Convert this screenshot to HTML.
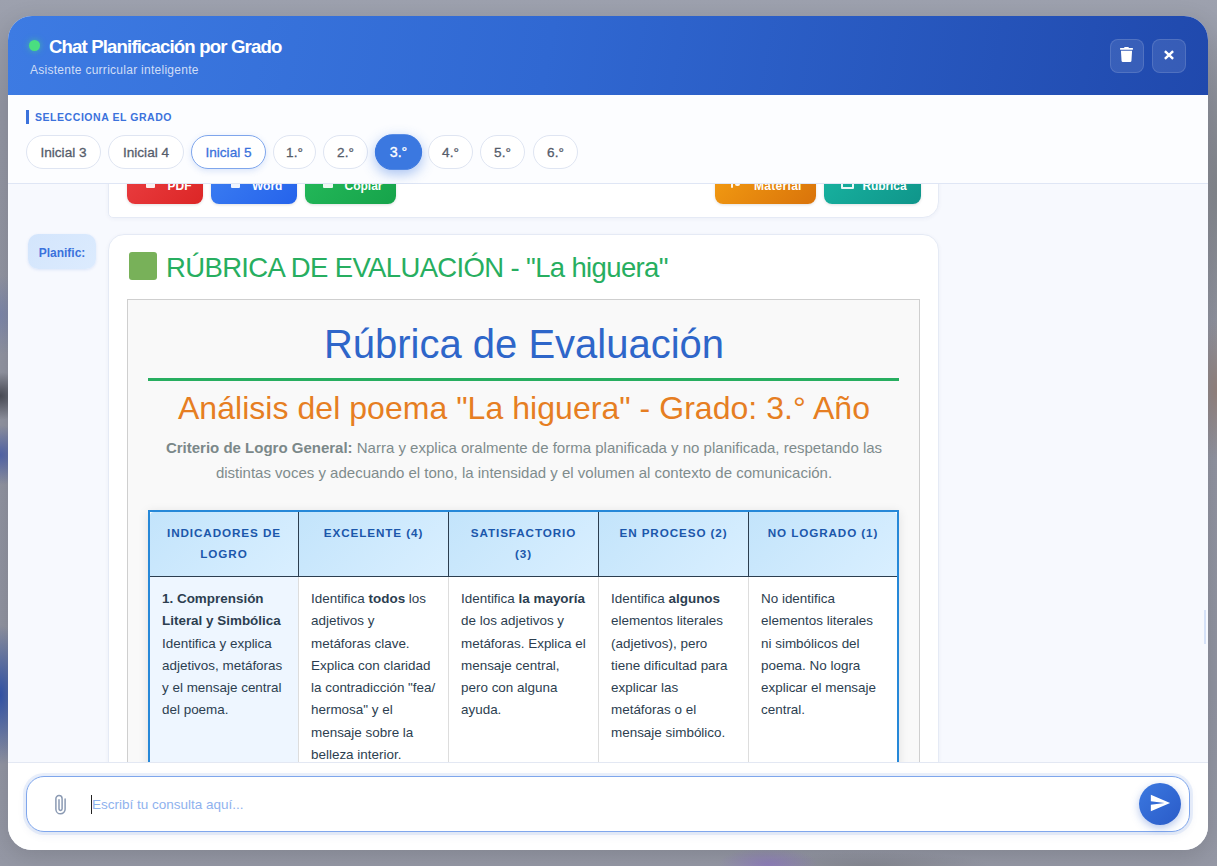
<!DOCTYPE html>
<html lang="es">
<head>
<meta charset="utf-8">
<title>Chat Planificación por Grado</title>
<style>
*{box-sizing:border-box;margin:0;padding:0}
html,body{width:1217px;height:866px;overflow:hidden}
body{font-family:"Liberation Sans",sans-serif;position:relative;background:#9397a5}
.backdrop{position:absolute;inset:0;background:
 radial-gradient(ellipse 26px 24px at 0px 396px,rgba(70,72,82,.95),rgba(70,72,82,0) 100%),
 radial-gradient(ellipse 30px 30px at 0px 455px,rgba(78,98,170,.95),rgba(78,98,170,0) 100%),
 radial-gradient(ellipse 26px 40px at 0px 315px,rgba(110,125,175,.6),rgba(110,125,175,0) 100%),
 radial-gradient(ellipse 30px 70px at 0px 695px,rgba(50,84,170,1),rgba(50,84,170,0) 100%),
 radial-gradient(ellipse 50px 16px at 768px 864px,rgba(140,120,190,.8),rgba(140,120,190,0) 100%),
 radial-gradient(ellipse 24px 70px at 1217px 390px,rgba(146,128,122,.95),rgba(146,128,122,0) 100%),
 radial-gradient(ellipse 24px 160px at 1217px 190px,rgba(128,131,136,.9),rgba(128,131,136,0) 100%),
 radial-gradient(ellipse 120px 14px at 870px 866px,rgba(125,127,136,.7),rgba(125,127,136,0) 100%),
 linear-gradient(180deg,#9da1ae 0%,#9295a2 12%,#9093a0 80%,#9598a5 100%);}
.modal{position:absolute;left:8px;top:16px;width:1200px;height:834px;border-radius:24px;background:#f7f9fe;overflow:hidden;box-shadow:0 6px 24px rgba(0,0,0,.13)}
.header{position:absolute;left:0;top:0;width:1200px;height:79px;background:linear-gradient(100deg,#3d7be3 0%,#3068d2 45%,#2049ad 100%)}
.dot{position:absolute;left:21px;top:24px;width:11px;height:11px;border-radius:50%;background:#4ade80;box-shadow:0 0 6px rgba(74,222,128,.6)}
.title{position:absolute;left:41px;top:20px;font-size:18.6px;font-weight:700;color:#fff;white-space:nowrap;line-height:22px;letter-spacing:-.85px}
.subtitle{position:absolute;left:22px;top:46px;font-size:12px;color:#d0ddf6;white-space:nowrap;line-height:16px;letter-spacing:.27px}
.hbtn{position:absolute;top:23px;width:34px;height:34px;border-radius:8px;background:rgba(255,255,255,.10);border:1px solid rgba(255,255,255,.13)}
.grades{position:absolute;left:0;top:79px;width:1200px;height:89px;background:#fcfdff;border-bottom:1px solid #dfe6f5}
.glabel{position:absolute;left:18px;top:15px;height:14px;border-left:3px solid #3b72dc;padding-left:6px;font-size:10.5px;font-weight:700;color:#3b72dc;letter-spacing:.55px;line-height:14px;white-space:nowrap}
.pill{position:absolute;top:40px;height:33.500px;border-radius:17px;border:1px solid #dfe5f2;background:#fff;color:#565d6b;font-size:13.6px;font-weight:400;-webkit-text-stroke:.3px currentColor;line-height:34px;text-align:center;white-space:nowrap}
.pill.hover{border-color:#7fa6ec;color:#3b72dc;box-shadow:0 2px 6px rgba(59,114,220,.18)}
.pill.sel{background:#3b78e0;border-color:#3b78e0;color:#fff;box-shadow:0 4px 12px rgba(59,120,224,.45);transform:scale(1.05)}
.chat{position:absolute;left:0;top:168px;width:1200px;height:578px;overflow:hidden;background:#f7f9fe}
.card{position:absolute;left:100px;width:831px;background:#fff;border:1px solid #e5eaf5;border-radius:16px;box-shadow:0 1px 4px rgba(40,60,120,.05)}
.abtn{position:absolute;top:42px;height:34px;border-radius:8px;color:#fff;font-size:12px;font-weight:700;white-space:nowrap;box-shadow:0 1px 3px rgba(0,0,0,.12)}
.abtn span{position:absolute;top:9px;line-height:14px}
.ic{position:absolute;top:8px;background:#fff;border-radius:1px;opacity:.92}
.ic2{position:absolute;top:9px;border:2px solid #fff;border-radius:1px;opacity:.92}
.badge{position:absolute;left:20px;top:50px;width:68px;height:35px;border-radius:10px;background:linear-gradient(135deg,#d3e5fc,#dcebfe);color:#3b72dc;font-size:12px;font-weight:700;line-height:39px;text-align:center;box-shadow:0 1px 3px rgba(59,114,220,.15)}
.gsq{position:absolute;left:20px;top:17px;width:28px;height:28px;border-radius:3px;background:#78b159}
.mtitle{position:absolute;left:57px;top:15px;font-size:27.5px;line-height:36px;color:#27ae60;white-space:nowrap;letter-spacing:-.64px}
.rbox{position:absolute;left:18px;top:64px;width:793px;height:700px;background:#f9f9f9;border:1px solid #cfcfcf}
.r1{position:absolute;left:0;width:792px;top:21px;text-align:center;font-size:40px;line-height:46px;color:#2e66c9;white-space:nowrap}
.rline{position:absolute;left:20px;top:78px;width:751px;height:3px;background:#27ae60}
.r2{position:absolute;left:0;width:792px;top:89px;text-align:center;font-size:32px;line-height:38px;color:#e67e22;white-space:nowrap;letter-spacing:.04px}
.r3{position:absolute;left:0;width:792px;top:135px;text-align:center;font-size:15px;line-height:25px;color:#7f8c8d;white-space:nowrap}
.r3 b{color:#7b8889}
.tbl{position:absolute;left:20px;top:210px;width:751px;height:400px;border:2px solid #2688d8;background:#fff;box-shadow:0 2px 10px rgba(0,0,0,.10)}
.th{position:absolute;top:0;height:65px;background:linear-gradient(135deg,#c3e4fb,#d9efff);border-right:1px solid #2c3e50;border-bottom:1px solid #2c3e50;color:#1b57ab;font-weight:700;font-size:11.7px;letter-spacing:.9px;line-height:20.5px;text-align:center;padding-top:11px;white-space:nowrap}
.td{position:absolute;top:65px;height:340px;border-right:1px solid #ddd;font-size:13.44px;line-height:22.25px;color:#2c3e50;padding:11px 0 0 12px;white-space:nowrap;background:#fff}
.td.first{background:#eef6ff}
.inputbar{position:absolute;left:0;top:746px;width:1200px;height:88px;background:#fff;border-top:1px solid #e3e8f3}
.inputbox{position:absolute;left:18px;top:13px;width:1164px;height:56px;border-radius:18px;border:1px solid #7fa6ec;background:#fff;box-shadow:0 0 0 3px rgba(59,120,224,.10),0 3px 10px rgba(40,70,140,.08)}
.ph{position:absolute;left:65px;top:19px;font-size:13.5px;color:#8fb2ee;line-height:18px;white-space:nowrap}
.caret{position:absolute;left:64px;top:18px;width:1px;height:19px;background:#222}
.send{position:absolute;left:1112px;top:6px;width:42px;height:42px;border-radius:50%;background:linear-gradient(135deg,#3b78e0,#2a5bc8);box-shadow:0 3px 8px rgba(42,91,200,.35)}
</style>
</head>
<body>
<div class="backdrop"></div>
<div class="modal">
  <div class="header">
    <div class="dot"></div>
    <div class="title">Chat Planificación por Grado</div>
    <div class="subtitle">Asistente curricular inteligente</div>
    <div class="hbtn" style="left:1102px"><svg width="13" height="15" viewBox="0 0 448 512" preserveAspectRatio="none" style="position:absolute;left:9px;top:7px"><path fill="#fff" d="M432 32H312l-9.400-18.700A24 24 0 0 0 281.100 0H166.800a23.720 23.720 0 0 0-21.400 13.300L136 32H16A16 16 0 0 0 0 48v32a16 16 0 0 0 16 16h416a16 16 0 0 0 16-16V48a16 16 0 0 0-16-16zM53.200 467a48 48 0 0 0 47.900 45h245.800a48 48 0 0 0 47.900-45L416 128H32z"/></svg></div>
    <div class="hbtn" style="left:1144px"><svg width="12" height="12" viewBox="0 0 12 12" style="position:absolute;left:10px;top:9px"><path d="M1.900 2.200L10.100 9.800M10.100 2.200L1.900 9.800" stroke="#fff" stroke-width="2.500" stroke-linecap="butt" fill="none"/></svg></div>
  </div>
  <div class="grades">
    <div class="glabel">SELECCIONA EL GRADO</div>
    <div class="pill" style="left:18px;width:75px">Inicial 3</div>
    <div class="pill" style="left:100px;width:76px">Inicial 4</div>
    <div class="pill hover" style="left:183px;width:75px">Inicial 5</div>
    <div class="pill" style="left:265px;width:43px">1.°</div>
    <div class="pill" style="left:315px;width:45px">2.°</div>
    <div class="pill sel" style="left:368px;width:45px">3.°</div>
    <div class="pill" style="left:420px;width:45px">4.°</div>
    <div class="pill" style="left:472px;width:45px">5.°</div>
    <div class="pill" style="left:525px;width:45px">6.°</div>
  </div>
  <div class="chat">
    <div class="card" style="top:-57px;height:91px;border-bottom-left-radius:5px">
      <div class="abtn" style="left:18px;width:76px;background:linear-gradient(135deg,#ea3d40,#dc2626)"><i class="ic" style="left:19px;width:9px;height:10px"></i><span style="left:40.5px">PDF</span></div>
      <div class="abtn" style="left:102px;width:86px;background:linear-gradient(135deg,#3b7df2,#2563eb)"><i class="ic" style="left:20px;width:9px;height:10px"></i><span style="left:41px">Word</span></div>
      <div class="abtn" style="left:196px;width:91px;background:linear-gradient(135deg,#24b95a,#16a34a)"><i class="ic" style="left:18px;width:10px;height:10px"></i><span style="left:39.5px">Copiar</span></div>
      <div class="abtn" style="left:606px;width:101px;background:linear-gradient(135deg,#f39c12,#d9730a)"><i class="ic" style="left:16px;width:2px;height:10px"></i><i class="ic" style="left:20px;width:5px;height:8px;border-radius:2px"></i><span style="left:39px;letter-spacing:.3px">Material</span></div>
      <div class="abtn" style="left:715px;width:97px;background:linear-gradient(135deg,#18b3a0,#0f958a)"><i class="ic2" style="left:17px;width:13px;height:10px"></i><span style="left:38.5px;letter-spacing:-.1px">Rúbrica</span></div>
    </div>
    <div class="badge">Planific:</div>
    <div class="card" style="top:50px;height:700px" id="msg">
      <div class="gsq"></div>
      <div class="mtitle">RÚBRICA DE EVALUACIÓN - "La higuera"</div>
      <div class="rbox">
        <div class="r1">Rúbrica de Evaluación</div>
        <div class="rline"></div>
        <div class="r2">Análisis del poema "La higuera" - Grado: 3.° Año</div>
        <div class="r3"><b>Criterio de Logro General:</b> Narra y explica oralmente de forma planificada y no planificada, respetando las<br>distintas voces y adecuando el tono, la intensidad y el volumen al contexto de comunicación.</div>
        <div class="tbl">
          <div class="th" style="left:0;width:149px;border-top-left-radius:4px">INDICADORES DE<br>LOGRO</div>
          <div class="th" style="left:149px;width:150px">EXCELENTE (4)</div>
          <div class="th" style="left:299px;width:150px">SATISFACTORIO<br>(3)</div>
          <div class="th" style="left:449px;width:150px">EN PROCESO (2)</div>
          <div class="th" style="left:599px;width:148px;border-right:0;border-top-right-radius:4px">NO LOGRADO (1)</div>
          <div class="td first" style="left:0;width:149px"><b>1. Comprensión<br>Literal y Simbólica</b><br>Identifica y explica<br>adjetivos, metáforas<br>y el mensaje central<br>del poema.</div>
          <div class="td" style="left:149px;width:150px">Identifica <b>todos</b> los<br>adjetivos y<br>metáforas clave.<br>Explica con claridad<br>la contradicción "fea/<br>hermosa" y el<br>mensaje sobre la<br>belleza interior.</div>
          <div class="td" style="left:299px;width:150px">Identifica <b>la mayoría</b><br>de los adjetivos y<br>metáforas. Explica el<br>mensaje central,<br>pero con alguna<br>ayuda.</div>
          <div class="td" style="left:449px;width:150px">Identifica <b>algunos</b><br>elementos literales<br>(adjetivos), pero<br>tiene dificultad para<br>explicar las<br>metáforas o el<br>mensaje simbólico.</div>
          <div class="td" style="left:599px;width:148px;border-right:0">No identifica<br>elementos literales<br>ni simbólicos del<br>poema. No logra<br>explicar el mensaje<br>central.</div>
        </div>
      </div>
    </div>
  </div>
  <div style="position:absolute;left:1196px;top:594px;width:2px;height:34px;background:#d6e2f8"></div>
  <div class="inputbar">
    <div class="inputbox">
      <div class="caret"></div>
      <div class="ph">Escribí tu consulta aquí...</div>
      <div class="send"><svg width="22" height="22" viewBox="0 0 24 24" style="position:absolute;left:10px;top:9px"><path fill="#fff" d="M2.010 21L23 12 2.010 3 2 10l15 2-15 2z"/></svg></div>
      <svg width="15" height="24" viewBox="0 0 14 22" preserveAspectRatio="none" style="position:absolute;left:25.700px;top:16px"><path d="M11.300 5.500v9.300a4.300 4.300 0 0 1-8.600 0V5.200a2.900 2.900 0 0 1 5.800 0v9.300a1.450 1.450 0 0 1-2.900 0V6.300" fill="none" stroke="#8b9ab3" stroke-width="1.400" stroke-linecap="round"/></svg>
    </div>
  </div>
</div>
</body>
</html>
